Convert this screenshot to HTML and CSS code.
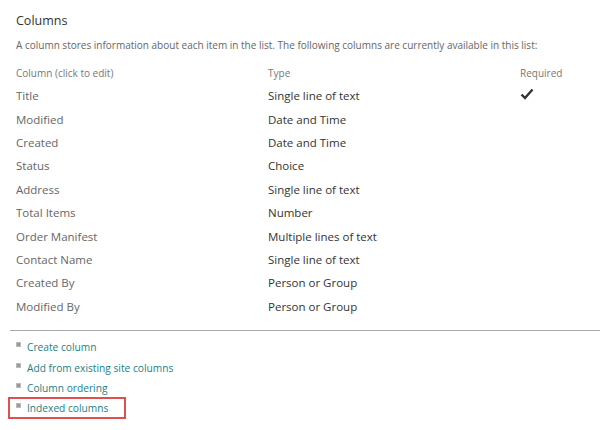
FILE: index.html
```html
<!DOCTYPE html>
<html>
<head>
<meta charset="utf-8">
<link rel="stylesheet" href="styles.css">
</head>
<body>
<div class="page">
  <h2 class="title">Columns</h2>
  <p class="desc">A column stores information about each item in the list. The following columns are currently available in this list:</p>
  <div class="table">
    <div class="row head"><span class="c1">Column (click to edit)</span><span class="c2">Type</span><span class="c3">Required</span></div>
    <div class="row"><span class="c1">Title</span><span class="c2">Single line of text</span><span class="c3"><svg class="check" width="14" height="12" viewBox="0 0 14 12"><path d="M1.5 6.5 L5 10 L12.5 1.5" fill="none" stroke="#333" stroke-width="2.4"/></svg></span></div>
    <div class="row"><span class="c1">Modified</span><span class="c2">Date and Time</span><span class="c3"></span></div>
    <div class="row"><span class="c1">Created</span><span class="c2">Date and Time</span><span class="c3"></span></div>
    <div class="row"><span class="c1">Status</span><span class="c2">Choice</span><span class="c3"></span></div>
    <div class="row"><span class="c1">Address</span><span class="c2">Single line of text</span><span class="c3"></span></div>
    <div class="row"><span class="c1">Total Items</span><span class="c2">Number</span><span class="c3"></span></div>
    <div class="row"><span class="c1">Order Manifest</span><span class="c2">Multiple lines of text</span><span class="c3"></span></div>
    <div class="row"><span class="c1">Contact Name</span><span class="c2">Single line of text</span><span class="c3"></span></div>
    <div class="row"><span class="c1">Created By</span><span class="c2">Person or Group</span><span class="c3"></span></div>
    <div class="row"><span class="c1">Modified By</span><span class="c2">Person or Group</span><span class="c3"></span></div>
  </div>
  <hr class="sep">
  <ul class="links">
    <li><span class="bullet"></span><a href="#">Create column</a></li>
    <li><span class="bullet"></span><a href="#">Add from existing site columns</a></li>
    <li><span class="bullet"></span><a href="#">Column ordering</a></li>
    <li class="hl"><span class="bullet"></span><a href="#">Indexed columns</a></li>
  </ul>
</div>
</body>
</html>
```
FILE: styles.css
```css
html, body { margin: 0; padding: 0; background: #fff; }
body { font-family: "Open Sans", "Noto Sans", sans-serif; color: #444; }
.page { padding: 10px 0 0 16px; }
.title { font-size: 12.5px; font-weight: 400; color: #333; margin: 2px 0 0 0; line-height: 18px; }
.desc { font-size: 10px; color: #666; margin: 7px 0 0 0; line-height: 16px; }
.table { margin-top: 9px; }
.row { display: grid; grid-template-columns: 252px 252px 1fr; height: 23.4px; align-items: center; font-size: 11.5px; }
.row.head { font-size: 10px; color: #777; height: 22px; }
.row .c1 { color: #666; }
.row .c2 { color: #333; }
.row.head .c1, .row.head .c2 { color: #777; }
.check { display: block; margin: -4px 0 0 0; }
.sep { margin: 12px 0 0 -6px; border: 0; border-top: 1px solid #aaa; height: 0; }
.links { list-style: none; margin: 6px 0 0 -8px; padding: 0; display: flex; flex-direction: column; align-items: flex-start; }
.links li { display: flex; align-items: center; height: 20.5px; font-size: 10.2px; padding-left: 8px; white-space: nowrap; box-sizing: border-box; }
.links a { color: #1a7f86; text-decoration: none; }
.bullet { width: 5px; height: 5px; background: #999; border: 1px solid #bbb; margin-right: 6px; margin-top: -5px; box-sizing: border-box; }
.links li.hl { border: 2px solid #e05050; padding: 0 16px 0 6px; height: 22px; margin-top: -1px; }
```
